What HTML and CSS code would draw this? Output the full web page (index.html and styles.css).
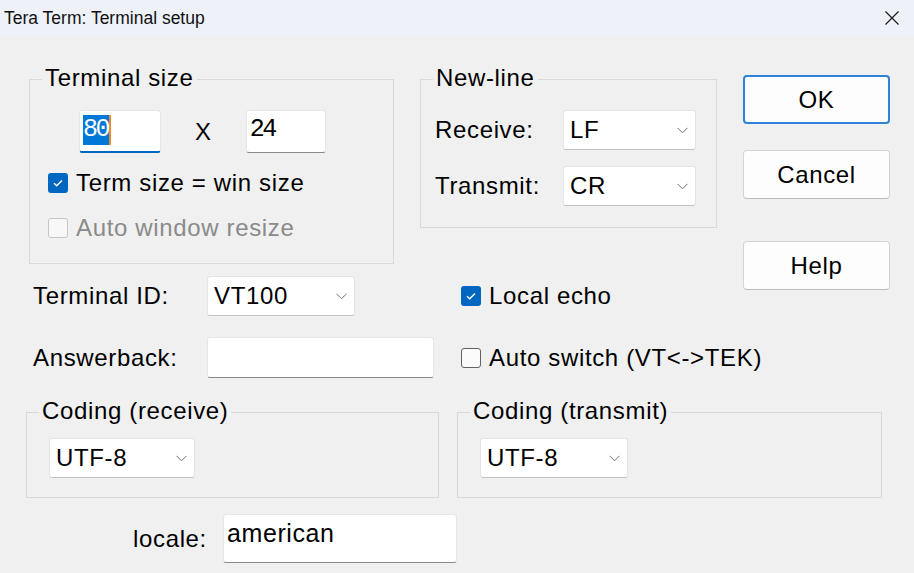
FILE: index.html
```html
<!DOCTYPE html>
<html lang="en">
<head>
<meta charset="utf-8">
<title>Tera Term: Terminal setup</title>
<link rel="stylesheet" href="styles.css">
</head>
<body>
<div class="titlebar">
  <span class="title">Tera Term: Terminal setup</span>
  <svg class="close" width="16" height="16" viewBox="0 0 16 16"><path d="M1.5 1.5 L14.5 14.5 M14.5 1.5 L1.5 14.5" stroke="#1b1b1b" stroke-width="1.2" fill="none"/></svg>
</div>
<div class="dialog">
  <div class="upper">
    <div class="groups">
      <fieldset class="group term-size">
        <legend>Terminal size</legend>
        <div class="size-row">
          <div class="field size-field focused"><span class="mono sel">80</span></div>
          <span class="times">X</span>
          <div class="field size-field"><span class="mono">24</span></div>
        </div>
        <label class="check ts-check1"><span class="box checked"><svg width="20" height="20" viewBox="0 0 20 20"><path d="M6 10.2 L8.7 12.8 L14 7.4" stroke="#fff" stroke-width="1.4" fill="none"/></svg></span>Term size = win size</label>
        <label class="check ts-check2 disabled"><span class="box dis"></span>Auto window resize</label>
      </fieldset>
      <fieldset class="group newline">
        <legend>New-line</legend>
        <div class="nl-grid">
          <span class="nl-label">Receive:</span>
          <div class="combo nl-combo"><span>LF</span><svg width="11" height="7" viewBox="0 0 11 7"><path d="M0.5 0.8 L5.5 5.8 L10.5 0.8" stroke="#707070" stroke-width="1" fill="none"/></svg></div>
          <span class="nl-label">Transmit:</span>
          <div class="combo nl-combo"><span>CR</span><svg width="11" height="7" viewBox="0 0 11 7"><path d="M0.5 0.8 L5.5 5.8 L10.5 0.8" stroke="#707070" stroke-width="1" fill="none"/></svg></div>
        </div>
      </fieldset>
    </div>
    <div class="buttons">
      <div class="btn default">OK</div>
      <div class="btn cancel">Cancel</div>
      <div class="btn help">Help</div>
    </div>
    <div class="row id-row">
      <span class="row-label">Terminal ID:</span>
      <div class="row-field"><div class="combo id-combo"><span>VT100</span><svg width="11" height="7" viewBox="0 0 11 7"><path d="M0.5 0.8 L5.5 5.8 L10.5 0.8" stroke="#707070" stroke-width="1" fill="none"/></svg></div></div>
      <label class="check"><span class="box checked"><svg width="20" height="20" viewBox="0 0 20 20"><path d="M6 10.2 L8.7 12.8 L14 7.4" stroke="#fff" stroke-width="1.4" fill="none"/></svg></span>Local echo</label>
    </div>
    <div class="row ab-row">
      <span class="row-label">Answerback:</span>
      <div class="row-field"><div class="field ab-field"></div></div>
      <label class="check"><span class="box off"></span>Auto switch (VT&lt;-&gt;TEK)</label>
    </div>
  </div>
  <div class="coding">
    <fieldset class="group coding-rx">
      <legend>Coding (receive)</legend>
      <div class="combo utf-combo"><span>UTF-8</span><svg width="11" height="7" viewBox="0 0 11 7"><path d="M0.5 0.8 L5.5 5.8 L10.5 0.8" stroke="#707070" stroke-width="1" fill="none"/></svg></div>
    </fieldset>
    <fieldset class="group coding-tx">
      <legend>Coding (transmit)</legend>
      <div class="combo utf-combo"><span>UTF-8</span><svg width="11" height="7" viewBox="0 0 11 7"><path d="M0.5 0.8 L5.5 5.8 L10.5 0.8" stroke="#707070" stroke-width="1" fill="none"/></svg></div>
    </fieldset>
  </div>
  <div class="locale-row">
    <span class="locale-label">locale:</span>
    <div class="field locale-field">american</div>
  </div>
</div>
</body>
</html>
```
FILE: styles.css
```css
* { box-sizing: border-box; }
html, body { margin: 0; padding: 0; }
body {
  width: 914px;
  height: 573px;
  overflow: hidden;
  background: #f0f0f0;
  color: #000;
  font-family: "Liberation Sans", Arial, sans-serif;
  font-size: 24px;
  letter-spacing: 0.65px;
}
.titlebar {
  height: 36px;
  background: #eef2f8;
  display: flex;
  align-items: center;
  justify-content: space-between;
  padding: 0 14px 0 4px;
}
.title { font-size: 17.5px; letter-spacing: 0; color: #111; }
.close { display: block; }

.dialog { padding: 28px 24px 0 26px; }

.upper {
  display: grid;
  grid-template-columns: 717px 147px;
  align-items: start;
}
.groups { display: flex; align-items: flex-start; grid-column: 1; grid-row: 1; }

.group {
  margin: 0;
  border: 1px solid #d9d9d9;
  padding: 0 12px;
  min-width: 0;
}
.group legend { padding: 0 3px 2px; }

.term-size { margin-left: 3px; width: 365px; padding-top: 16px; padding-bottom: 21px; }
.size-row { display: flex; align-items: center; margin-left: 37px; }
.field {
  background: #fff;
  border: 1px solid #e6e6e6;
  border-bottom-color: #8a8a8a;
  border-radius: 3px;
}
.size-field { height: 43px; padding: 3px 3px 0; }
.size-field.focused { width: 82px; border-bottom: 2px solid #0067c0; }
.size-row .size-field:last-child { width: 80px; }
.times { margin: 0 34px; }
.mono {
  display: inline-block;
  font-family: "Liberation Mono", monospace;
  font-size: 25px;
  letter-spacing: -2.4px;
  line-height: 30px;
  height: 30px;
  padding-right: 2px;
}
.sel { background: #0078d7; color: #fff; border-right: 2px solid #f0892a; padding-right: 1px; }

.check { display: flex; align-items: center; white-space: nowrap; }
.box {
  width: 20px;
  height: 20px;
  border-radius: 3px;
  margin-right: 8px;
  flex: none;
}
.box svg { display: block; }
.box.checked { background: #0067c0; }
.box.off { border: 1px solid #626262; background: #fbfbfb; }
.box.dis { border: 1px solid #c6c6c6; background: #f8f8f8; }
.ts-check1 { margin-left: 6px; margin-top: 16px; }
.ts-check2 { margin-left: 6px; margin-top: 17px; }
.disabled { color: #8a8a8a; }

.newline { margin-left: 26px; width: 297px; padding-top: 16px; padding-bottom: 21px; }
.nl-grid {
  display: grid;
  grid-template-columns: 130px 133px;
  row-gap: 16px;
  align-items: center;
}
.nl-label { padding-left: 2px; }

.combo {
  display: flex;
  align-items: center;
  justify-content: space-between;
  background: #fff;
  border: 1px solid #e4e4e4;
  border-bottom-color: #c2c2c2;
  border-radius: 3px;
  height: 40px;
  padding: 0 7px 0 6px;
}
.combo svg { flex: none; }
.nl-combo { width: 133px; }

.buttons {
  grid-column: 2;
  grid-row: 1 / span 2;
  display: flex;
  flex-direction: column;
  padding-top: 11px;
}
.btn {
  width: 147px;
  height: 49px;
  background: #fdfdfd;
  border: 1px solid #d3d3d3;
  border-bottom-color: #bcbcbc;
  border-radius: 4px;
  display: flex;
  align-items: center;
  justify-content: center;
}
.btn.default { border: 2px solid #2f82d8; }
.btn.cancel { margin-top: 26px; }
.btn.help { margin-top: 42px; }

.row { display: flex; align-items: center; margin-left: 7px; }
.id-row { grid-column: 1; grid-row: 2; margin-top: 12px; }
.ab-row { grid-column: 1 / -1; grid-row: 3; margin-top: 21px; }
.row-label { width: 174px; flex: none; }
.row-field { width: 254px; flex: none; }
.id-combo { width: 148px; }
.ab-field { width: 227px; height: 41px; }

.coding { display: flex; align-items: flex-start; margin-top: 19px; }
.coding-rx { width: 413px; padding-top: 11px; padding-bottom: 19px; }
.coding-tx { width: 425px; margin-left: 18px; padding-top: 11px; padding-bottom: 19px; }
.utf-combo { margin-left: 10px; width: 146px; }
.coding-tx .utf-combo { width: 148px; }

.locale-row { display: flex; align-items: center; margin-top: 16px; }
.locale-label { margin-left: 107px; width: 90px; flex: none; }
.locale-field {
  width: 234px;
  height: 49px;
  padding: 4px 3px 0;
  font-size: 25px;
  letter-spacing: 0.6px;
}
```
